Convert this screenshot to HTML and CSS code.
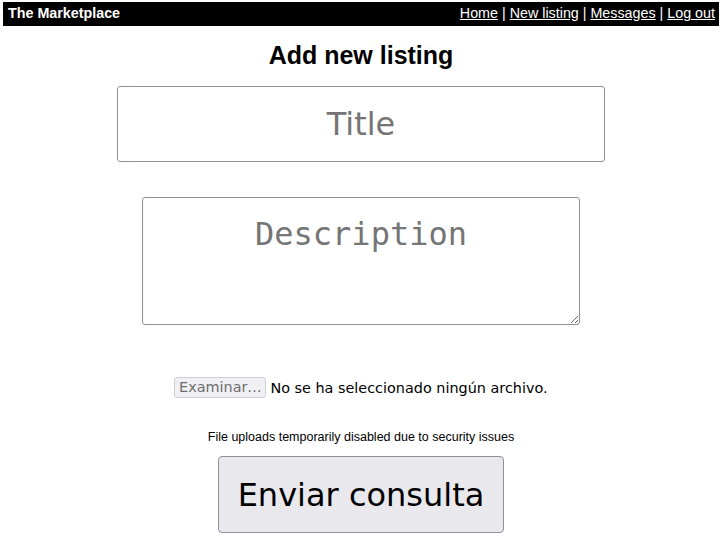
FILE: index.html
```html
<!DOCTYPE html>
<html lang="en">
<head>
<meta charset="utf-8">
<title>The Marketplace</title>
<link rel="stylesheet" href="styles.css">
</head>
<body>
<nav class="topbar">
  <span class="brand">The Marketplace</span>
  <span class="links"><a href="#">Home</a> | <a href="#">New listing</a> | <a href="#">Messages</a> | <a href="#">Log out</a></span>
</nav>
<h2 class="heading">Add new listing</h2>
<form class="form">
  <input class="title-input" type="text" placeholder="Title">
  <textarea class="desc" placeholder="Description"></textarea>
  <div class="file-row">
    <span class="file-btn">Examinar…</span>
    <span class="file-text">No se ha seleccionado ningún archivo.</span>
  </div>
  <p class="note">File uploads temporarily disabled due to security issues</p>
  <button class="submit" type="button">Enviar consulta</button>
</form>
</body>
</html>
```
FILE: styles.css
```css
html, body {
  background: #fff;
}
body {
  margin: 2px 3px;
  font-family: "Liberation Sans", Arial, sans-serif;
  color: #000;
}
.topbar {
  background: #000;
  color: #fff;
  height: 24px;
  box-sizing: border-box;
  padding: 3px 4px 0 5px;
  display: flex;
  justify-content: space-between;
  align-items: flex-start;
  font-size: 14.3px;
  line-height: 17px;
}
.brand {
  font-weight: bold;
}
.links a {
  color: #fff;
}
.heading {
  margin: 14px 0 16px;
  font-size: 25px;
  line-height: 30px;
  text-align: center;
  font-weight: bold;
}
.form {
  display: flex;
  flex-direction: column;
  align-items: center;
}
.title-input {
  width: 488px;
  height: 76px;
  box-sizing: border-box;
  border: 1px solid #8f8f9d;
  border-radius: 3px;
  font-family: "DejaVu Sans", sans-serif;
  font-size: 32px;
  text-align: center;
  padding: 0;
  margin: 0;
  outline: none;
}
.title-input::placeholder {
  color: #757575;
}
.desc {
  margin: 35px 0 0;
  width: 438px;
  height: 128px;
  box-sizing: border-box;
  border: 1px solid #8f8f9d;
  border-radius: 3px;
  font-family: "DejaVu Sans Mono", monospace;
  font-size: 32px;
  text-align: center;
  padding: 17px 2px 2px;
  outline: none;
  resize: both;
}
.desc::placeholder {
  color: #757575;
}
.file-row {
  margin-top: 52px;
  display: flex;
  align-items: center;
  gap: 4px;
  font-family: "DejaVu Sans", sans-serif;
  font-size: 14.4px;
}
.file-btn {
  box-sizing: border-box;
  height: 21px;
  width: 92px;
  display: flex;
  align-items: center;
  justify-content: center;
  background: #f0f0f4;
  border: 1px solid #cfcfd6;
  border-radius: 3px;
  color: #6d6d6d;
  line-height: 19px;
}
.file-text {
  color: #000;
}
.note {
  margin: 32px 0 11px;
  font-size: 12.5px;
  line-height: 15px;
}
.submit {
  width: 286px;
  height: 77px;
  box-sizing: border-box;
  background: #e9e9ed;
  border: 1px solid #8f8f9d;
  border-radius: 4px;
  font-family: "DejaVu Sans", sans-serif;
  font-size: 32px;
  color: #000;
  padding: 0;
}
```
